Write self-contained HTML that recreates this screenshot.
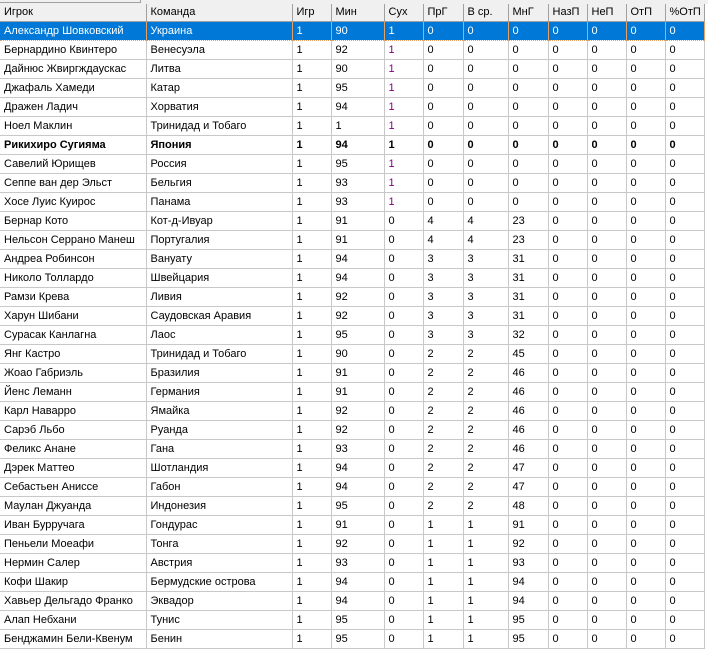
<!DOCTYPE html>
<html><head><meta charset="utf-8"><style>
body{margin:0;width:708px;height:654px;background:#fff;overflow:hidden;font-family:"Liberation Sans",Arial,sans-serif;font-size:11px;color:#000}
.top{position:absolute;left:0;top:0;width:708px;height:4px;background:#f0f0f0}
.top i{position:absolute;left:0;top:0;width:140px;height:2px;border-bottom:1px solid #a0a0a0;border-right:1px solid #a0a0a0}
table{position:absolute;left:0;top:4px;width:704px;border-collapse:collapse;table-layout:fixed}
td{height:18px;padding:0 0 0 4px;border-right:1px solid #c8c8c8;border-bottom:1px solid #c8c8c8;white-space:nowrap;overflow:hidden;line-height:18px}
tr.h td{background:#f0f0f0;border-right:1px solid #a0a0a0;border-bottom:1px solid #a0a0a0;height:17px;line-height:17px}
tr.s td{background:#0078d7;color:#fff;border-right:1px solid #e8a060;border-bottom:1px dotted #e8a060}
tr.b td{font-weight:bold}
.p{color:#800080}
tr.s .p{color:#fff}
</style></head><body>
<div class="top"><i></i></div>
<table>
<colgroup><col style="width:146px"><col style="width:146px"><col style="width:39px"><col style="width:53px"><col style="width:39px"><col style="width:40px"><col style="width:45px"><col style="width:40px"><col style="width:39px"><col style="width:39px"><col style="width:39px"><col style="width:39px"></colgroup>
<tr class="h"><td>Игрок</td><td>Команда</td><td>Игр</td><td>Мин</td><td>Сух</td><td>ПрГ</td><td>В ср.</td><td>МнГ</td><td>НазП</td><td>НеП</td><td>ОтП</td><td>%ОтП</td></tr>
<tr class="s"><td>Александр Шовковский</td><td>Украина</td><td>1</td><td>90</td><td class="p">1</td><td>0</td><td>0</td><td>0</td><td>0</td><td>0</td><td>0</td><td>0</td></tr>
<tr><td>Бернардино Квинтеро</td><td>Венесуэла</td><td>1</td><td>92</td><td class="p">1</td><td>0</td><td>0</td><td>0</td><td>0</td><td>0</td><td>0</td><td>0</td></tr>
<tr><td>Дайнюс Жвиргждаускас</td><td>Литва</td><td>1</td><td>90</td><td class="p">1</td><td>0</td><td>0</td><td>0</td><td>0</td><td>0</td><td>0</td><td>0</td></tr>
<tr><td>Джафаль Хамеди</td><td>Катар</td><td>1</td><td>95</td><td class="p">1</td><td>0</td><td>0</td><td>0</td><td>0</td><td>0</td><td>0</td><td>0</td></tr>
<tr><td>Дражен Ладич</td><td>Хорватия</td><td>1</td><td>94</td><td class="p">1</td><td>0</td><td>0</td><td>0</td><td>0</td><td>0</td><td>0</td><td>0</td></tr>
<tr><td>Ноел Маклин</td><td>Тринидад и Тобаго</td><td>1</td><td>1</td><td class="p">1</td><td>0</td><td>0</td><td>0</td><td>0</td><td>0</td><td>0</td><td>0</td></tr>
<tr class="b"><td>Рикихиро Сугияма</td><td>Япония</td><td>1</td><td>94</td><td>1</td><td>0</td><td>0</td><td>0</td><td>0</td><td>0</td><td>0</td><td>0</td></tr>
<tr><td>Савелий Юрищев</td><td>Россия</td><td>1</td><td>95</td><td class="p">1</td><td>0</td><td>0</td><td>0</td><td>0</td><td>0</td><td>0</td><td>0</td></tr>
<tr><td>Сеппе ван дер Эльст</td><td>Бельгия</td><td>1</td><td>93</td><td class="p">1</td><td>0</td><td>0</td><td>0</td><td>0</td><td>0</td><td>0</td><td>0</td></tr>
<tr><td>Хосе Луис Куирос</td><td>Панама</td><td>1</td><td>93</td><td class="p">1</td><td>0</td><td>0</td><td>0</td><td>0</td><td>0</td><td>0</td><td>0</td></tr>
<tr><td>Бернар Кото</td><td>Кот-д-Ивуар</td><td>1</td><td>91</td><td>0</td><td>4</td><td>4</td><td>23</td><td>0</td><td>0</td><td>0</td><td>0</td></tr>
<tr><td>Нельсон Серрано Манеш</td><td>Португалия</td><td>1</td><td>91</td><td>0</td><td>4</td><td>4</td><td>23</td><td>0</td><td>0</td><td>0</td><td>0</td></tr>
<tr><td>Андреа Робинсон</td><td>Вануату</td><td>1</td><td>94</td><td>0</td><td>3</td><td>3</td><td>31</td><td>0</td><td>0</td><td>0</td><td>0</td></tr>
<tr><td>Николо Толлардо</td><td>Швейцария</td><td>1</td><td>94</td><td>0</td><td>3</td><td>3</td><td>31</td><td>0</td><td>0</td><td>0</td><td>0</td></tr>
<tr><td>Рамзи Крева</td><td>Ливия</td><td>1</td><td>92</td><td>0</td><td>3</td><td>3</td><td>31</td><td>0</td><td>0</td><td>0</td><td>0</td></tr>
<tr><td>Харун Шибани</td><td>Саудовская Аравия</td><td>1</td><td>92</td><td>0</td><td>3</td><td>3</td><td>31</td><td>0</td><td>0</td><td>0</td><td>0</td></tr>
<tr><td>Сурасак Канлагна</td><td>Лаос</td><td>1</td><td>95</td><td>0</td><td>3</td><td>3</td><td>32</td><td>0</td><td>0</td><td>0</td><td>0</td></tr>
<tr><td>Янг Кастро</td><td>Тринидад и Тобаго</td><td>1</td><td>90</td><td>0</td><td>2</td><td>2</td><td>45</td><td>0</td><td>0</td><td>0</td><td>0</td></tr>
<tr><td>Жоао Габриэль</td><td>Бразилия</td><td>1</td><td>91</td><td>0</td><td>2</td><td>2</td><td>46</td><td>0</td><td>0</td><td>0</td><td>0</td></tr>
<tr><td>Йенс Леманн</td><td>Германия</td><td>1</td><td>91</td><td>0</td><td>2</td><td>2</td><td>46</td><td>0</td><td>0</td><td>0</td><td>0</td></tr>
<tr><td>Карл Наварро</td><td>Ямайка</td><td>1</td><td>92</td><td>0</td><td>2</td><td>2</td><td>46</td><td>0</td><td>0</td><td>0</td><td>0</td></tr>
<tr><td>Сарэб Льбо</td><td>Руанда</td><td>1</td><td>92</td><td>0</td><td>2</td><td>2</td><td>46</td><td>0</td><td>0</td><td>0</td><td>0</td></tr>
<tr><td>Феликс Анане</td><td>Гана</td><td>1</td><td>93</td><td>0</td><td>2</td><td>2</td><td>46</td><td>0</td><td>0</td><td>0</td><td>0</td></tr>
<tr><td>Дэрек Маттео</td><td>Шотландия</td><td>1</td><td>94</td><td>0</td><td>2</td><td>2</td><td>47</td><td>0</td><td>0</td><td>0</td><td>0</td></tr>
<tr><td>Себастьен Аниссе</td><td>Габон</td><td>1</td><td>94</td><td>0</td><td>2</td><td>2</td><td>47</td><td>0</td><td>0</td><td>0</td><td>0</td></tr>
<tr><td>Маулан Джуанда</td><td>Индонезия</td><td>1</td><td>95</td><td>0</td><td>2</td><td>2</td><td>48</td><td>0</td><td>0</td><td>0</td><td>0</td></tr>
<tr><td>Иван Бурручага</td><td>Гондурас</td><td>1</td><td>91</td><td>0</td><td>1</td><td>1</td><td>91</td><td>0</td><td>0</td><td>0</td><td>0</td></tr>
<tr><td>Пеньели Моеафи</td><td>Тонга</td><td>1</td><td>92</td><td>0</td><td>1</td><td>1</td><td>92</td><td>0</td><td>0</td><td>0</td><td>0</td></tr>
<tr><td>Нермин Салер</td><td>Австрия</td><td>1</td><td>93</td><td>0</td><td>1</td><td>1</td><td>93</td><td>0</td><td>0</td><td>0</td><td>0</td></tr>
<tr><td>Кофи Шакир</td><td>Бермудские острова</td><td>1</td><td>94</td><td>0</td><td>1</td><td>1</td><td>94</td><td>0</td><td>0</td><td>0</td><td>0</td></tr>
<tr><td>Хавьер Дельгадо Франко</td><td>Эквадор</td><td>1</td><td>94</td><td>0</td><td>1</td><td>1</td><td>94</td><td>0</td><td>0</td><td>0</td><td>0</td></tr>
<tr><td>Алап Небхани</td><td>Тунис</td><td>1</td><td>95</td><td>0</td><td>1</td><td>1</td><td>95</td><td>0</td><td>0</td><td>0</td><td>0</td></tr>
<tr><td>Бенджамин Бели-Квенум</td><td>Бенин</td><td>1</td><td>95</td><td>0</td><td>1</td><td>1</td><td>95</td><td>0</td><td>0</td><td>0</td><td>0</td></tr>
</table>
</body></html>
